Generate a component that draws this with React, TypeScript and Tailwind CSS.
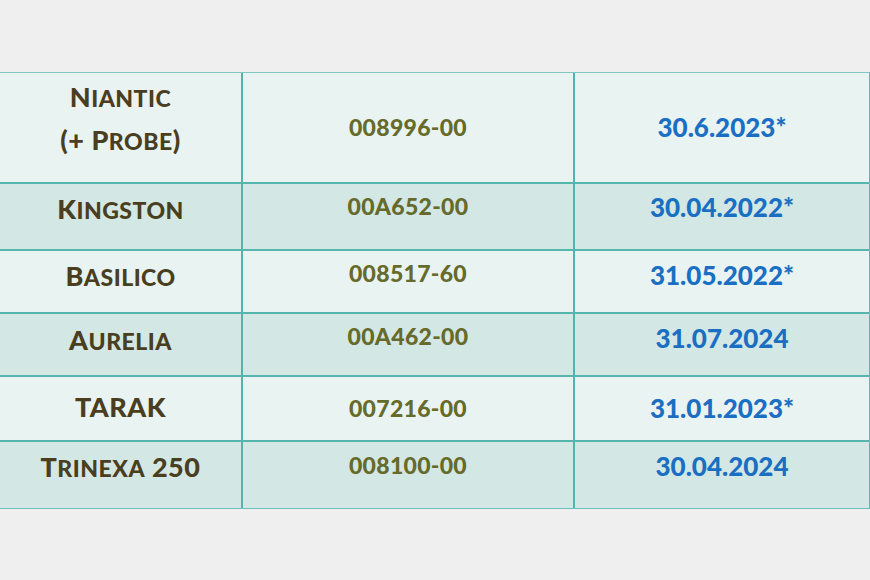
import React from 'react';

type Row = {
  name: React.ReactNode;
  code: string;
  date: string;
  h: string;
  bg: string;
  pads: [string, string, string];
};

function Big({ children }: { children: React.ReactNode }) {
  return <span className="text-[27px]">{children}</span>;
}

function Small({ children }: { children: React.ReactNode }) {
  return <span className="text-[23px] uppercase">{children}</span>;
}

const rows: Row[] = [
  {
    name: (
      <>
        <div>
          <Big>N</Big>
          <Small>iantic</Small>
        </div>
        <div>
          <Big>(+ P</Big>
          <Small>robe</Small>
          <Big>)</Big>
        </div>
      </>
    ),
    code: '008996-00',
    date: '30.6.2023*',
    h: 'h-[111px]',
    bg: 'bg-[#e9f3f2]',
    pads: ['pb-[16px]', 'pb-[0px]', 'pb-[0px]'],
  },
  {
    name: (
      <div>
        <Big>K</Big>
        <Small>ingston</Small>
      </div>
    ),
    code: '00A652-00',
    date: '30.04.2022*',
    h: 'h-[67px]',
    bg: 'bg-[#d3e7e4]',
    pads: ['pb-[13px]', 'pb-[21px]', 'pb-[19px]'],
  },
  {
    name: (
      <div>
        <Big>B</Big>
        <Small>asilico</Small>
      </div>
    ),
    code: '008517-60',
    date: '31.05.2022*',
    h: 'h-[63px]',
    bg: 'bg-[#e9f3f2]',
    pads: ['pb-[9px]', 'pb-[17px]', 'pb-[13px]'],
  },
  {
    name: (
      <div>
        <Big>A</Big>
        <Small>urelia</Small>
      </div>
    ),
    code: '00A462-00',
    date: '31.07.2024',
    h: 'h-[63px]',
    bg: 'bg-[#d3e7e4]',
    pads: ['pb-[7px]', 'pb-[17px]', 'pb-[13px]'],
  },
  {
    name: (
      <div>
        <Big>TARAK</Big>
      </div>
    ),
    code: '007216-00',
    date: '31.01.2023*',
    h: 'h-[65px]',
    bg: 'bg-[#e9f3f2]',
    pads: ['pb-[0px]', 'pb-[0px]', 'pb-[0px]'],
  },
  {
    name: (
      <div>
        <Big>T</Big>
        <Small>rinexa</Small>
        <Big> 250</Big>
      </div>
    ),
    code: '008100-00',
    date: '30.04.2024',
    h: 'h-[67px]',
    bg: 'bg-[#d3e7e4]',
    pads: ['pb-[14px]', 'pb-[20px]', 'pb-[18px]'],
  },
];

export default function App() {
  return (
    <div className="h-[580px] w-[870px] bg-[#efefef] pt-[72px] font-['Lato',sans-serif] font-black">
      <div className="border-t border-t-[#7fc9c1] border-r border-r-[#5ab9b0]">
        {rows.map((r, i) => (
          <div
            key={i}
            className={`flex ${r.h} ${r.bg} ${
              i === rows.length - 1 ? 'border-b border-b-[#6cc0b8]' : 'border-b-2 border-b-[#56b6ad]'
            }`}
          >
            <div
              className={`w-[243px] shrink-0 border-r-2 border-r-[#52b4ab] flex flex-col items-center justify-center text-center leading-[39px] tracking-[0.5px] text-[#4a3e20] ${r.pads[0]}`}
            >
              {r.name}
            </div>
            <div
              className={`w-[332px] shrink-0 border-r-2 border-r-[#52b4ab] flex items-center justify-center text-[23px] tracking-[0.3px] text-[#666a2b] ${r.pads[1]}`}
            >
              {r.code}
            </div>
            <div
              className={`flex-1 flex items-center justify-center text-[26px] text-[#1a6fc3] ${r.pads[2]}`}
            >
              {r.date}
            </div>
          </div>
        ))}
      </div>
    </div>
  );
}
